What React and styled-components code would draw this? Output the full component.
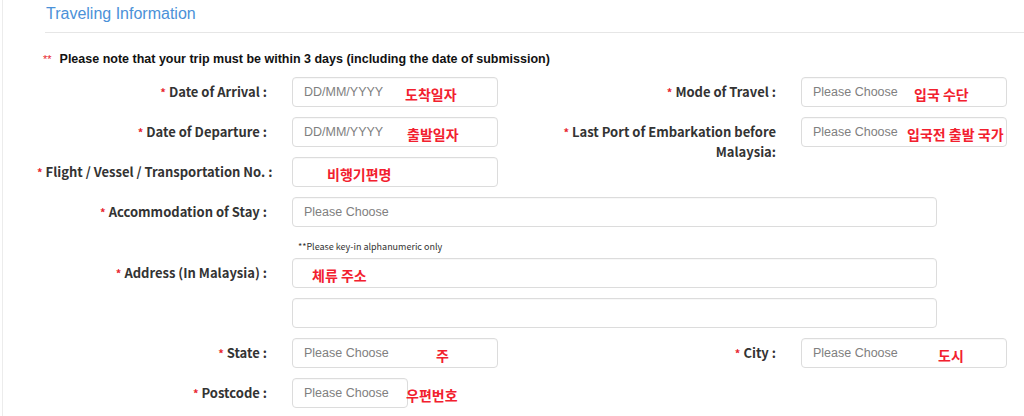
import styled, { createGlobalStyle } from 'styled-components'

const GlobalStyle = createGlobalStyle`
  body {
    margin: 0;
    background: #fff;
    font-family: "Liberation Sans", Arial, sans-serif;
  }
`

const KO = `"Noto Sans CJK KR", "Noto Sans", sans-serif`

export default function App() {
  return (
    <Page>
      <GlobalStyle />
      <Header>
        <Title>Traveling Information</Title>
      </Header>

      <Notice>
        <span>**</span>Please note that your trip must be within 3 days (including the date of submission)
      </Notice>

      <Form>
        <Row>
          <Label><Req>*</Req>Date of Arrival :</Label>
          <Field>
            <Input placeholder="DD/MM/YYYY" readOnly />
            <Memo $left={113}>도착일자</Memo>
          </Field>
          <Label><Req>*</Req>Mode of Travel :</Label>
          <Field>
            <Input placeholder="Please Choose" readOnly />
            <Memo $left={113}>입국 수단</Memo>
          </Field>
        </Row>

        <Row>
          <Label><Req>*</Req>Date of Departure :</Label>
          <Field>
            <Input placeholder="DD/MM/YYYY" readOnly />
            <Memo $left={115}>출발일자</Memo>
          </Field>
          <Label><Req>*</Req>Last Port of Embarkation before<br />Malaysia:</Label>
          <Field>
            <Input placeholder="Please Choose" readOnly />
            <Memo $left={106}>입국전 출발 국가</Memo>
          </Field>
        </Row>

        <Row>
          <Label><Req>*</Req>Flight / Vessel / Transportation No. :</Label>
          <Field>
            <Input readOnly />
            <Memo $left={35}>비행기편명</Memo>
          </Field>
        </Row>

        <Row>
          <Label><Req>*</Req>Accommodation of Stay :</Label>
          <Field $wide>
            <Input placeholder="Please Choose" readOnly />
          </Field>
        </Row>

        <Row $short>
          <span />
          <Hint>**Please key-in alphanumeric only</Hint>
        </Row>

        <Row>
          <Label><Req>*</Req>Address (In Malaysia) :</Label>
          <Field $wide>
            <Input readOnly />
            <Memo $left={20}>체류 주소</Memo>
          </Field>
        </Row>

        <Row>
          <span />
          <Field $wide>
            <Input readOnly />
          </Field>
        </Row>

        <Row>
          <Label><Req>*</Req>State :</Label>
          <Field>
            <Input placeholder="Please Choose" readOnly />
            <Memo $left={144}>주</Memo>
          </Field>
          <Label><Req>*</Req>City :</Label>
          <Field>
            <Input placeholder="Please Choose" readOnly />
            <Memo $left={137}>도시</Memo>
          </Field>
        </Row>

        <Row>
          <Label><Req>*</Req>Postcode :</Label>
          <Field $width={116}>
            <Input placeholder="Please Choose" readOnly />
            <Memo $left={114}>우편번호</Memo>
          </Field>
        </Row>
      </Form>
    </Page>
  )
}

const Page = styled.div`
  margin-left: 2px;
  border-left: 1px solid #ececec;
  height: 416px;
  overflow: hidden;
`

const Header = styled.div`
  margin-left: 42px;
  height: 32px;
  border-bottom: 1px solid #e6e6e6;
`

const Title = styled.h2`
  margin: 0;
  padding: 4px 0 0 1px;
  font-size: 16px;
  font-weight: 400;
  line-height: 20px;
  color: #4b91d8;
`

const Notice = styled.p`
  margin: 18px 0 0 40px;
  font-size: 12.5px;
  font-weight: 700;
  line-height: 16px;
  color: #111;

  span {
    color: #e8262f;
    font-weight: 400;
    font-size: 11px;
    margin-right: 8px;
  }
`

const Form = styled.div`
  display: flex;
  flex-direction: column;
  gap: 10px;
  margin-top: 10px;
  padding-left: 34px;
`

const Row = styled.div`
  display: grid;
  grid-template-columns: 230px 206px 253px 206px;
  column-gap: 25px;
  height: ${p => (p.$short ? '11px' : '30px')};
`

const Label = styled.label`
  text-align: right;
  padding-top: 5px;
  font-family: ${KO};
  font-size: 13px;
  font-weight: 700;
  line-height: 20px;
  color: #333;
  white-space: nowrap;
`

const Req = styled.span`
  color: #e8262f;
  font-size: 11px;
  margin-right: 3px;
`

const Field = styled.div`
  position: relative;
  height: 30px;
  grid-column: ${p => (p.$wide ? '2 / 5' : 'auto')};
  width: ${p => (p.$wide ? '645px' : p.$width ? `${p.$width}px` : 'auto')};
`

const Input = styled.input`
  box-sizing: border-box;
  width: 100%;
  height: 30px;
  margin: 0;
  padding: 0 11px;
  border: 1px solid #dcdcdc;
  border-radius: 4px;
  box-shadow: inset 0 1px 1px rgba(0, 0, 0, 0.03);
  background: #fff;
  font-family: "Liberation Sans", Arial, sans-serif;
  font-size: 12.5px;
  color: #555;
  outline: none;

  &::placeholder {
    color: #808080;
  }
`

const Memo = styled.span`
  position: absolute;
  top: 7px;
  left: ${p => p.$left}px;
  font-family: ${KO};
  font-size: 14px;
  font-weight: 700;
  line-height: 20px;
  color: #f2202e;
  white-space: nowrap;
  pointer-events: none;
`

const Hint = styled.div`
  box-sizing: border-box;
  height: 11px;
  padding: 4px 0 0 6px;
  font-family: ${KO};
  font-size: 9px;
  line-height: 11px;
  color: #333;
  white-space: nowrap;
`
